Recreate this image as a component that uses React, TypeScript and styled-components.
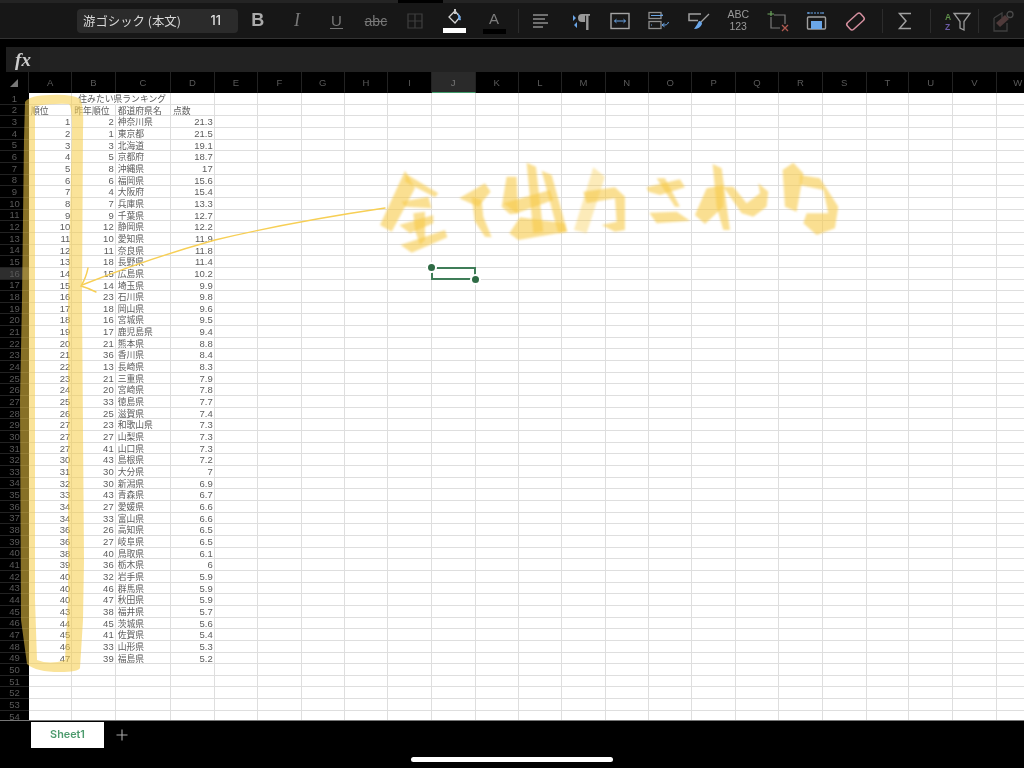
import React from "react";
import styled, { createGlobalStyle } from "styled-components";

const Global = createGlobalStyle`
  html, body { margin: 0; padding: 0; background: #000; }
`;

const CJK = `"Noto Sans CJK JP", "Noto Sans", sans-serif`;

const Screen = styled.div`
  position: relative;
  width: 1024px;
  height: 768px;
  overflow: hidden;
  display: flex;
  flex-direction: column;
  background: #000;
  filter: blur(0.35px);
`;

const TopStrip = styled.div`
  height: 3px;
  display: flex;
  gap: 45px;
  background: #000;
`;
const StripPart = styled.div<{ $w: number }>`
  width: ${(p) => p.$w}px;
  flex: ${(p) => (p.$w ? "none" : "1")};
  background: #242424;
`;

const Toolbar = styled.div`
  height: 35px;
  padding-left: 77px;
  display: flex;
  align-items: center;
  background: #171717;
  border-bottom: 1px solid #333;
  box-sizing: content-box;
`;

const FontBox = styled.div`
  width: 161px;
  height: 24px;
  box-sizing: border-box;
  padding: 0 17px 0 6px;
  display: flex;
  align-items: center;
  justify-content: space-between;
  background: #2b2b2b;
  border-radius: 4px;
  color: #d8d8d8;
  font-family: ${CJK};
  font-size: 12.4px;
`;
const FontSize = styled.span`
  font-family: "Inter", sans-serif;
  font-size: 12.5px;
  font-weight: 500;
  color: #e4e4e4;
`;

const Slot = styled.div`
  width: 39.4px;
  height: 34px;
  flex: none;
  display: flex;
  flex-direction: column;
  align-items: center;
  justify-content: center;
  color: #7d7d7d;
`;

const Bold = styled.span`
  font: 700 18px "Liberation Sans", sans-serif;
  color: #aaa;
`;
const Italic = styled.span`
  font: italic 400 18px "Liberation Serif", serif;
  color: #777;
`;
const Under = styled.span`
  font: 400 15px "Liberation Sans", sans-serif;
  color: #777;
  line-height: 15px;
  border-bottom: 1px solid #777;
  padding: 0 1px;
`;
const Strike = styled.span`
  font: 400 14px "Liberation Sans", sans-serif;
  color: #777;
  text-decoration: line-through;
`;
const LetterA = styled.span`
  font: 400 15px "Liberation Sans", sans-serif;
  color: #7d7d7d;
  line-height: 16px;
  margin-top: 3px;
`;
const ColorBar = styled.div<{ $c: string }>`
  width: 23px;
  height: 5px;
  margin-top: 2px;
  background: ${(p) => p.$c};
`;
const AbcLabel = styled.div`
  font: 400 10.5px/11.5px "Liberation Sans", sans-serif;
  color: #9a9a9a;
  text-align: center;
`;

const Sep = styled.div<{ $l: number; $r: number }>`
  width: 1px;
  height: 24px;
  flex: none;
  margin: 0 ${(p) => p.$r}px 0 ${(p) => p.$l}px;
  background: #2c2c2c;
`;

const Gap = styled.div`
  height: 8px;
  background: #000;
`;

const FormulaBar = styled.div`
  height: 25px;
  margin-left: 6px;
  display: flex;
  background: #222;
`;
const FxCell = styled.div`
  width: 34px;
  display: flex;
  align-items: center;
  justify-content: center;
  background: #1e1e1e;
  color: #ccc;
  font: italic 700 19px "Liberation Serif", serif;
`;

const ColumnHeader = styled.div<{ $t: string }>`
  height: 21px;
  display: grid;
  grid-template-columns: ${(p) => p.$t};
  background: #000;
  flex: none;
`;
const Corner = styled.div`
  display: flex;
  align-items: center;
  justify-content: center;
  border-right: 1px solid #222;
`;
const ColLabel = styled.div<{ $active: boolean }>`
  display: flex;
  align-items: center;
  justify-content: center;
  font: 400 9.5px "Liberation Sans", sans-serif;
  color: ${(p) => (p.$active ? "#777" : "#5a5a5a")};
  background: ${(p) => (p.$active ? "#2a2a2a" : "transparent")};
  border-right: 1px solid #222;
  border-bottom: 1px solid ${(p) => (p.$active ? "#3f9b6a" : "transparent")};
`;

const Sheet = styled.div<{ $t: string }>`
  height: 627px;
  flex: none;
  overflow: hidden;
  display: grid;
  grid-template-columns: ${(p) => p.$t};
  grid-auto-rows: 11.66px;
  background: #fff;
`;
const RowLabel = styled.div<{ $active: boolean }>`
  display: flex;
  align-items: center;
  justify-content: center;
  font: 400 9.5px "Liberation Sans", sans-serif;
  color: #5a5a5a;
  background: ${(p) => (p.$active ? "#2e2e2e" : "#000")};
  border-bottom: 1px solid #222;
`;
const Cell = styled.div<{ $align?: string; $indent?: number; $open?: boolean }>`
  position: relative;
  box-sizing: border-box;
  border-right: 1px solid ${(p) => (p.$open ? "transparent" : "#dedede")};
  border-bottom: 1px solid #dedede;
  padding: 0 1px 0 ${(p) => p.$indent ?? 2}px;
  text-align: ${(p) => p.$align ?? "left"};
  white-space: nowrap;
  font-family: ${(p) => (p.$align === "right" ? `"Liberation Sans", sans-serif` : CJK)};
  font-size: ${(p) => (p.$align === "right" ? "9.5px" : "8.8px")};
  line-height: 11px;
  color: #5c5c5c;
`;

const Selection = styled.div`
  position: absolute;
  z-index: 3;
  inset: -1px;
  border: 2px solid #3f7d58;
`;
const Handle = styled.div<{ $end: boolean }>`
  position: absolute;
  width: 7px;
  height: 7px;
  border-radius: 50%;
  background: #2f6b45;
  box-shadow: 0 0 0 2px #fff;
  ${(p) => (p.$end ? "right: -5px; bottom: -5px;" : "left: -5px; top: -5px;")}
`;

const TabBar = styled.div`
  flex: 1;
  display: flex;
  flex-direction: column;
  border-top: 1px solid #777;
  background: #000;
`;
const TabRow = styled.div`
  height: 27px;
  padding-left: 31px;
  display: flex;
  align-items: center;
`;
const Tab = styled.div`
  width: 73px;
  height: 26px;
  display: flex;
  align-items: center;
  justify-content: center;
  background: #fff;
  color: #4b9a6c;
  font: 600 10.8px "Inter", sans-serif;
`;
const AddTab = styled.div`
  margin-left: 12px;
  display: flex;
`;
const HomeBar = styled.div`
  width: 202px;
  height: 5px;
  margin: 9px auto 0;
  border-radius: 3px;
  background: #fff;
`;

const Ink = styled.svg`
  position: absolute;
  left: 0;
  top: 0;
  z-index: 2;
  pointer-events: none;
`;

const colWidths = [43.3, 43.4, 55.3, 43.7, 43.3, 43.7, 43, 43.6, 43.4, 44, 43, 43.6, 43.4, 43.3, 43.3, 43.7, 43.3, 43.4, 44, 42.6, 44, 43.4, 43.4, 43.4];
const template = `29px ${colWidths.map((w) => `${w}px`).join(" ")}`;
const letters = "ABCDEFGHIJKLMNOPQRSTUVWX".split("");

const raw = `1 2 神奈川県 21.3|2 1 東京都 21.5|3 3 北海道 19.1|4 5 京都府 18.7|5 8 沖縄県 17|6 6 福岡県 15.6|7 4 大阪府 15.4|8 7 兵庫県 13.3|9 9 千葉県 12.7|10 12 静岡県 12.2|11 10 愛知県 11.9|12 11 奈良県 11.8|13 18 長野県 11.4|14 15 広島県 10.2|15 14 埼玉県 9.9|16 23 石川県 9.8|17 18 岡山県 9.6|18 16 宮城県 9.5|19 17 鹿児島県 9.4|20 21 熊本県 8.8|21 36 香川県 8.4|22 13 長崎県 8.3|23 21 三重県 7.9|24 20 宮崎県 7.8|25 33 徳島県 7.7|26 25 滋賀県 7.4|27 23 和歌山県 7.3|27 27 山梨県 7.3|27 41 山口県 7.3|30 43 島根県 7.2|31 30 大分県 7|32 30 新潟県 6.9|33 43 青森県 6.7|34 27 愛媛県 6.6|34 33 富山県 6.6|36 26 高知県 6.5|36 27 岐阜県 6.5|38 40 鳥取県 6.1|39 36 栃木県 6|40 32 岩手県 5.9|40 46 群馬県 5.9|40 47 秋田県 5.9|43 38 福井県 5.7|44 45 茨城県 5.6|45 41 佐賀県 5.4|46 33 山形県 5.3|47 39 福島県 5.2`;
const rows = raw.split("|").map((r) => r.split(" "));

const cellProps = (row: number, col: number) => {
  if (row === 1 && col === 1) return { text: "住みたい県ランキング", indent: 6, open: true };
  if (row === 2) {
    const heads = ["順位", "昨年順位", "都道府県名", "点数"];
    if (col < 4) return { text: heads[col] };
  }
  const d = rows[row - 3];
  if (d && col < 4) return { text: d[col], align: col === 2 ? "left" : "right" };
  return {};
};

const Icon = ({ children, w = 26, h = 24 }: { children: React.ReactNode; w?: number; h?: number }) => (
  <svg width={w} height={h} viewBox={`0 0 ${w} ${h}`} fill="none">
    {children}
  </svg>
);

const BLUE = "#6aa6e8";

const brush: [string, number?][] = [
  ["105,62 135,115 65,245 30,225"],
  ["108,72 205,130 195,142 105,95"],
  ["95,155 175,140 185,175 105,170"],
  ["88,225 190,195 190,220 120,250"],
  ["130,190 165,185 165,270 150,285 135,240"],
  ["92,285 225,240 232,262 125,308"],
  ["268,145 345,100 362,125 325,170"],
  ["305,140 335,150 340,200 365,262 345,260 315,215"],
  ["410,80 440,80 445,190 420,193 395,170"],
  ["470,38 498,50 520,245 490,250"],
  ["515,62 545,75 592,245 565,250"],
  ["400,160 540,120 550,150 440,190"],
  ["450,202 585,220 590,245 445,270 418,250"],
  ["670,52 705,80 650,250 612,240", 0.38],
  ["640,125 735,112 765,140 765,240 735,245 695,225 740,215 735,145 650,160"],
  ["830,112 930,88 945,112 870,135 835,125"],
  ["860,85 885,85 930,170 915,170"],
  ["838,188 920,185 960,212 860,220"],
  ["1028,42 1055,55 1080,240 1060,240 1040,170"],
  ["1010,115 1060,105 1060,170 1005,222 975,195"],
  ["1060,110 1090,110 1130,160 1170,130 1165,100 1195,125 1190,170 1150,200 1115,190"],
  ["1238,60 1270,38 1300,70 1280,185 1245,170"],
  ["1290,75 1350,85 1405,170 1395,235 1340,255 1300,220 1310,190 1375,190 1360,120 1290,105"],
];

export default function App() {
  return (
    <Screen>
      <Global />
      <TopStrip>
        <StripPart $w={398} />
        <StripPart $w={0} />
      </TopStrip>
      <Toolbar>
        <FontBox>
          <span>游ゴシック (本文)</span>
          <FontSize>11</FontSize>
        </FontBox>
        <Slot><Bold>B</Bold></Slot>
        <Slot><Italic>I</Italic></Slot>
        <Slot><Under>U</Under></Slot>
        <Slot><Strike>abc</Strike></Slot>
        <Slot>
          <Icon>
            <path d="M6 5h14v14H6zM13 5v14M6 12h14" stroke="#3f3f3f" strokeWidth="1.2" />
          </Icon>
        </Slot>
        <Slot>
          <Icon w={24} h={18}>
            <path d="M12 3 L6 9 L12 15 L17 9 Z" stroke="#d5d5d5" strokeWidth="1.3" />
            <path d="M11 1 h2 v5 h-2z" fill="#c8c8c8" />
            <path d="M15 5 Q18 8 18 12 Q16 13 15.5 11 L15 8z" fill={BLUE} />
          </Icon>
          <ColorBar $c="#fff" />
        </Slot>
        <Slot>
          <LetterA>A</LetterA>
          <ColorBar $c="#000" />
        </Slot>
        <Sep $l={4} $r={2.8} />
        <Slot>
          <Icon>
            <path d="M5 6h15M5 10h12M5 14h15M5 18h10" stroke="#8f8f8f" strokeWidth="1.3" />
          </Icon>
        </Slot>
        <Slot>
          <Icon>
            <path d="M14 5h8v1.8h-1.5V21h-2.4V6.8h-1V13h-3.1a4 4 0 0 1 0-8z M19 6.8" fill="#9a9a9a" />
            <path d="M5 6 L8 9 L5 12z M9 13 L6 16 L9 19z" fill={BLUE} />
          </Icon>
        </Slot>
        <Slot>
          <Icon w={22} h={20}>
            <rect x="2" y="2.5" width="18" height="15" stroke="#a5a5a5" strokeWidth="1.4" />
            <path d="M5.5 10h11M5.5 10l2-1.8M5.5 10l2 1.8M16.5 10l-2-1.8M16.5 10l-2 1.8" stroke={BLUE} strokeWidth="1" />
          </Icon>
        </Slot>
        <Slot>
          <Icon>
            <rect x="3" y="3.5" width="12" height="6" stroke="#8f8f8f" strokeWidth="1.3" />
            <rect x="3" y="12.5" width="12" height="7" stroke="#8f8f8f" strokeWidth="1.3" />
            <path d="M5 6.5h12l-1.5-1.3M6 16h-1M16 16h3c2 0 3-1.5 3.5-3M16 16l2.5-1.8M16 16l2.5 1.8" stroke={BLUE} strokeWidth="1" />
          </Icon>
        </Slot>
        <Slot>
          <Icon>
            <path d="M15 5H3v6.5h9" stroke="#a0a0a0" strokeWidth="1.5" />
            <path d="M23 5 L15 13" stroke="#a0a0a0" strokeWidth="1.3" />
            <path d="M13 12 Q16 12 16 15 Q14 20 8 20 Q11 16 13 12z" fill={BLUE} />
          </Icon>
        </Slot>
        <Slot>
          <AbcLabel>ABC<br />123</AbcLabel>
        </Slot>
        <Slot>
          <Icon>
            <path d="M6 2v5M2.5 5H9" stroke="#6fa85f" strokeWidth="1.2" />
            <path d="M9 6h11v9M6 8v11h9" stroke="#7a7a7a" strokeWidth="1.2" />
            <path d="M17 16l6 6M23 16l-6 6" stroke="#b05a50" strokeWidth="1.3" />
          </Icon>
        </Slot>
        <Slot>
          <Icon>
            <path d="M4 4h15M4 3v2M19 3v2M8 4l-1.5 0" stroke={BLUE} strokeWidth="1.2" strokeDasharray="2 1" />
            <rect x="3.5" y="8" width="18" height="12" rx="1" stroke="#a0a0a0" strokeWidth="1.4" />
            <rect x="7" y="12" width="11" height="8" fill={BLUE} />
          </Icon>
        </Slot>
        <Slot>
          <Icon>
            <rect x="3.5" y="8" width="18" height="9" rx="2.5" transform="rotate(-42 12.5 12.5)" stroke="#d58f9f" strokeWidth="1.5" />
          </Icon>
        </Slot>
        <Sep $l={6} $r={2.3} />
        <Slot>
          <Icon>
            <path d="M19 4.5H7.5L14 12L7.5 19.5H19" stroke="#a0a0a0" strokeWidth="1.5" />
          </Icon>
        </Slot>
        <Sep $l={5} $r={7.3} />
        <Slot>
          <Icon w={32} h={24}>
            <text x="3" y="11" fontFamily="Liberation Sans" fontSize="8.5" fontWeight="700" fill="#5f8f4a">A</text>
            <text x="3" y="21" fontFamily="Liberation Sans" fontSize="8.5" fontWeight="700" fill="#6a5aa5">Z</text>
            <path d="M12 4.5H28L22 12.5V21L18 19V12.5Z" stroke="#9a9a9a" strokeWidth="1.3" />
          </Icon>
        </Slot>
        <Sep $l={0.6} $r={4} />
        <Slot>
          <Icon>
            <path d="M4 9 L12 4 L12 9 M4 9V22H17V14" stroke="#3f3f3f" strokeWidth="1.3" />
            <path d="M6 14 L15 6 L19 10 L10 18z" fill="#4f3a3a" />
            <circle cx="20" cy="5.5" r="3" stroke="#4a4a4a" strokeWidth="1.3" />
          </Icon>
        </Slot>
      </Toolbar>
      <Gap />
      <FormulaBar>
        <FxCell>fx</FxCell>
      </FormulaBar>
      <ColumnHeader $t={template}>
        <Corner>
          <svg width="10" height="10" viewBox="0 0 10 10">
            <path d="M9 1V9H1Z" fill="#777" />
          </svg>
        </Corner>
        {letters.map((l) => (
          <ColLabel key={l} $active={l === "J"}>{l}</ColLabel>
        ))}
      </ColumnHeader>
      <Sheet $t={template}>
        {Array.from({ length: 54 }, (_, i) => i + 1).map((row) => (
          <React.Fragment key={row}>
            <RowLabel $active={row === 16}>{row}</RowLabel>
            {letters.map((l, col) => {
              const c = cellProps(row, col) as { text?: string; align?: string; indent?: number; open?: boolean };
              const selected = row === 16 && l === "J";
              return (
                <Cell key={l} $align={c.align} $indent={c.indent} $open={c.open}>
                  {c.text}
                  {selected && (
                    <Selection>
                      <Handle $end={false} />
                      <Handle $end={true} />
                    </Selection>
                  )}
                </Cell>
              );
            })}
          </React.Fragment>
        ))}
      </Sheet>
      <TabBar>
        <TabRow>
          <Tab>Sheet1</Tab>
          <AddTab>
            <svg width="12" height="12" viewBox="0 0 12 12">
              <path d="M6 .5v11M.5 6h11" stroke="#aaa" strokeWidth="1.1" />
            </svg>
          </AddTab>
        </TabRow>
        <HomeBar />
      </TabBar>

      <Ink width="1024" height="768" viewBox="0 0 1024 768" fill="none">
        <path
          fillRule="evenodd"
          fill="#f6cc45"
          opacity="0.55"
          d="M25 102 Q30 95 50 95 Q72 94 80 99 Q84 104 83 130 L82 300 L84 560 L83 620 L80 668 Q78 672 60 672 Q36 672 27 664 L21 620 L20 400 L22 300 L24 140 Z
             M35 106 Q55 103 69 104 Q72 107 72 130 L68 300 L68 600 L65 660 Q50 665 37 660 L35 600 L35 300 Z"
        />
        <path d="M385 208 Q290 222 215 240 Q150 258 82 285" stroke="#f7cf55" strokeWidth="1.4" strokeLinecap="round" />
        <path d="M88 268 Q86 278 81 286 Q88 288 96 292" stroke="#f7cf55" strokeWidth="1.4" strokeLinecap="round" />
        <g transform="translate(370 150) scale(0.3333)" fill="#f6ca48" style={{ filter: "blur(3px)" }}>
          {brush.map(([pts, o], i) => (
            <polygon key={i} points={pts} fillOpacity={o ?? 0.6} />
          ))}
        </g>
      </Ink>
    </Screen>
  );
}
